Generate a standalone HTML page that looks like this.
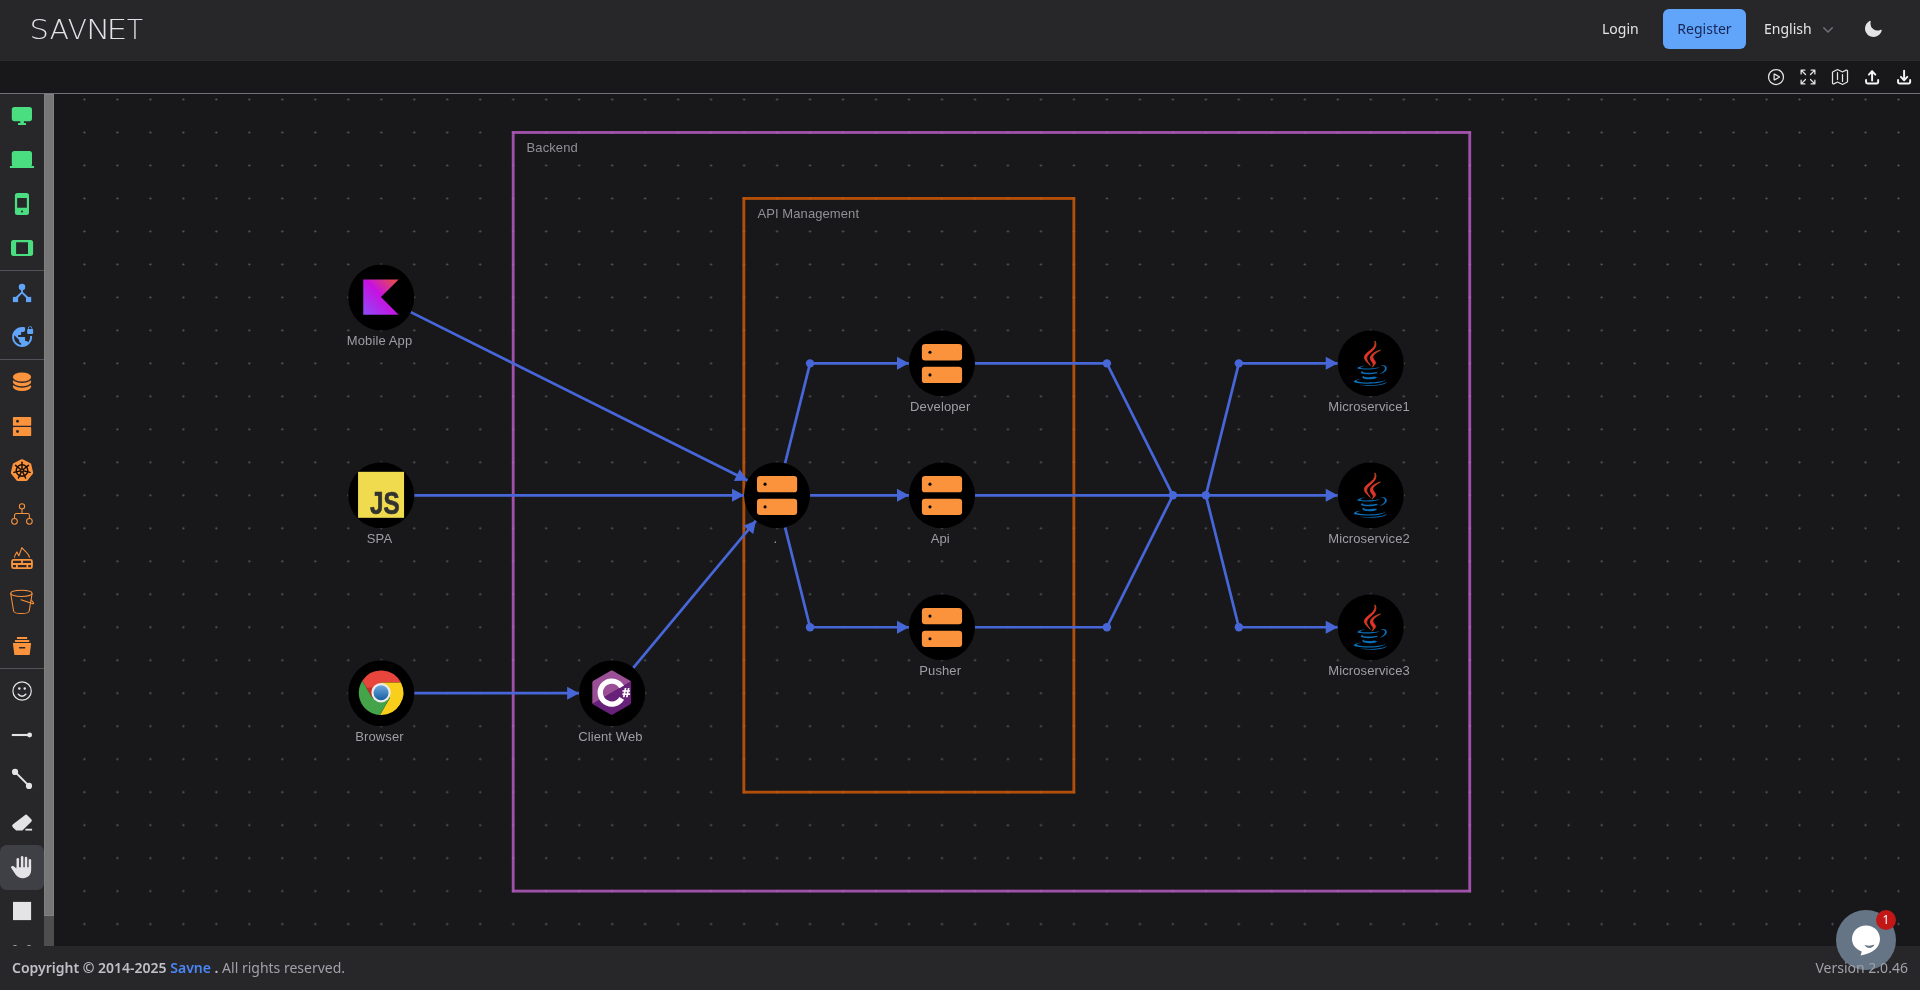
<!DOCTYPE html>
<html lang="en"><head><meta charset="utf-8"><title>SAVNET</title>
<style>
*{box-sizing:border-box}
html,body{margin:0;padding:0}
body{width:1920px;height:990px;overflow:hidden;background:#18181b;position:relative;font-family:"Noto Sans","Liberation Sans","DejaVu Sans",sans-serif;font-size:14px;color:#e4e4e7}
#root{position:absolute;left:0;top:0;width:1920px;height:990px;overflow:hidden;will-change:transform}
#hd{position:absolute;left:0;top:0;width:1920px;height:61px;background:#27272a;border-bottom:1px solid #2a2a2d}
#logo{position:absolute;left:0;top:0}
.hl{position:absolute;top:9px;height:40px;line-height:39px;white-space:nowrap}
#reg{position:absolute;left:1663px;top:9px;width:83px;height:40px;border-radius:6px;background:#60a5fa;color:#172554;text-align:center;line-height:39px}
#tb{position:absolute;left:0;top:61px;width:1920px;height:33px;border-bottom:1px solid #71717a;background:#18181b}
.ti{position:absolute;top:6px}
#sb{position:absolute;left:0;top:94px;width:44px;height:852px;background:#27272a;overflow:hidden}
.si{position:absolute;display:block;overflow:visible}
.sep{position:absolute;left:0;width:44px;height:1px;background:#52525b}
#sel{position:absolute;left:0;top:751px;width:43.5px;height:44.500px;border-radius:6.500px;background:#3f3f46}
#scr{position:absolute;left:44px;top:94px;width:10px;height:852px;background:#4e4e4e}
#thumb{position:absolute;left:0;top:0;width:10px;height:822px;background:#777;border:1px solid #818181}
#cv{position:absolute;left:54px;top:94px}
.nl{font-family:"Liberation Sans",Arial,sans-serif;font-size:13px;fill:#9e9ea3;letter-spacing:.11px}
.gl{font-family:"Liberation Sans",Arial,sans-serif;font-size:13px;fill:#909095;letter-spacing:.09px}
#ft{position:absolute;left:0;top:946px;width:1920px;height:44px;background:#27272a;color:#a1a1aa}
#ft b{color:#c0c0c6;font-weight:600}
#ft a{color:#4a86f5;text-decoration:none}
#ftl{position:absolute;left:12px;top:12px;line-height:20px;white-space:nowrap}
#ftr{position:absolute;right:12.1px;top:12px;line-height:20px;white-space:nowrap;z-index:5}
#chat{position:absolute;left:1836px;top:910px;width:60px;height:60px;border-radius:50%;background:#657585;z-index:3}
#badge{position:absolute;left:1876px;top:910px;width:20px;height:20px;border-radius:50%;background:#c11717;color:#fff;font-size:12px;line-height:19px;text-align:center;z-index:4}
</style></head><body><div id="root">
<div id="hd">
<svg id="logo" width="180" height="61" viewBox="0 0 180 61" font-family="'DejaVu Sans','Liberation Sans',sans-serif" font-weight="200" font-size="26" fill="#e2e2e6"><text transform="translate(29.44 39) scale(1.18 1)">S</text><text transform="translate(49.7 39) scale(1.075 1)">A</text><text transform="translate(67.7 39) scale(1.075 1)">V</text><text transform="translate(85.95 39) scale(1.25 1)">N</text><text transform="translate(106.4 39) scale(1.27 1)">E</text><text transform="translate(127 39)">T</text></svg>
<div class="hl" style="left:1602px">Login</div>
<div id="reg">Register</div>
<div class="hl" style="left:1764px">English</div>
<svg style="position:absolute;left:1818px;top:19px" width="20" height="20" viewBox="0 0 20 20"><path fill="#71717a" fill-rule="evenodd" d="M5.220 8.220a.75.75 0 0 1 1.060 0L10 11.940l3.720-3.720a.75.75 0 1 1 1.060 1.060l-4.250 4.250a.75.75 0 0 1-1.060 0L5.220 9.280a.75.75 0 0 1 0-1.060Z" clip-rule="evenodd"/></svg>
<svg style="position:absolute;left:1863px;top:19px" width="20" height="20" viewBox="0 0 20 20"><path fill="#e4e4e7" fill-rule="evenodd" d="M7.455 2.004a.75.75 0 0 1 .26.770 7 7 0 0 0 9.958 7.967.75.75 0 0 1 1.067.853A8.500 8.500 0 1 1 6.647 1.921a.75.75 0 0 1 .808.083Z" clip-rule="evenodd"/></svg>
</div>
<div id="tb"><svg class="ti" style="left:1766px;top:6px" width="20" height="20" viewBox="0 0 24 24" fill="none" stroke="#e4e4e7" stroke-width="1.500" stroke-linecap="round" stroke-linejoin="round"><path d="M21 12a9 9 0 1 1-18 0 9 9 0 0 1 18 0Z"/><path d="M15.910 11.672a.375.375 0 0 1 0 .656l-5.603 3.113a.375.375 0 0 1-.557-.328V8.887c0-.286.307-.466.557-.327l5.603 3.112Z"/></svg><svg class="ti" style="left:1798px;top:6px" width="20" height="20" viewBox="0 0 24 24" fill="none" stroke="#e4e4e7" stroke-width="1.500" stroke-linecap="round" stroke-linejoin="round"><path d="M3.750 3.750v4.500m0-4.500h4.500m-4.500 0L9 9M3.750 20.250v-4.500m0 4.500h4.500m-4.500 0L9 15M20.250 3.750h-4.500m4.500 0v4.500m0-4.500L15 9m5.250 11.250h-4.500m4.500 0v-4.500m0 4.500L15 15"/></svg><svg class="ti" style="left:1830px;top:6px" width="20" height="20" viewBox="0 0 24 24" fill="none" stroke="#e4e4e7" stroke-width="1.500" stroke-linecap="round" stroke-linejoin="round"><path d="M9 6.750V15m6-6v8.250m.503 3.498 4.875-2.437c.381-.19.622-.58.622-1.006V4.820c0-.836-.88-1.380-1.628-1.006l-3.869 1.934c-.317.159-.69.159-1.006 0L9.503 3.252a1.125 1.125 0 0 0-1.006 0L3.622 5.689C3.240 5.880 3 6.270 3 6.695V19.180c0 .836.880 1.380 1.628 1.006l3.869-1.934c.317-.159.69-.159 1.006 0l4.994 2.497c.317.158.69.158 1.006 0Z"/></svg><svg style="position:absolute;left:1856px;top:0" width="64" height="33" viewBox="1856 61 64 33" fill="none" stroke="#f4f4f5" stroke-width="1.950" stroke-linecap="round" stroke-linejoin="round"><path d="M1866.05 79.900v2.050a1.500 1.500 0 0 0 1.500 1.500h9.100a1.500 1.500 0 0 0 1.500-1.500V79.900"/><path d="M1872.10 80.400V71.300M1868.90 74.600 1872.10 71.150 1875.30 74.600"/><path d="M1898.05 79.900v2.050a1.500 1.500 0 0 0 1.500 1.500h9.100a1.500 1.500 0 0 0 1.500-1.500V79.900"/><path d="M1904.10 70.600V80.200M1900.90 76.900 1904.10 80.350 1907.30 76.900"/></svg></div>
<div id="sb"><div id="sel"></div><div class="sep" style="top:176px"></div><div class="sep" style="top:265px"></div><div class="sep" style="top:574px"></div>
<svg width="44" height="852" viewBox="0 94 44 852" style="position:absolute;left:0;top:0"><g fill="#4ade80"><rect x="11.800" y="106.900" width="20.200" height="14.300" rx="2.600"/><rect x="20.300" y="120.500" width="3.600" height="3"/><rect x="18" y="123" width="8" height="2" rx=".3"/></g>
<g fill="#4ade80"><rect x="11.800" y="150.900" width="20.200" height="15.800" rx="2.600"/><rect x="9.900" y="165.900" width="24.200" height="2.100" rx=".3"/></g>
<path fill="#4ade80" fill-rule="evenodd" d="M17.400 192.900h9.100a2.500 2.500 0 0 1 2.500 2.500v17.200a2.500 2.500 0 0 1-2.500 2.500h-9.100a2.500 2.500 0 0 1-2.500-2.500v-17.200a2.500 2.500 0 0 1 2.500-2.500zM17.150 198.100v9.600h9.700v-9.600zM22 210.500a1 1 0 1 0 0 2 1 1 0 0 0 0-2z"/>
<path fill="#4ade80" fill-rule="evenodd" d="M13.500 240h17.100a2.500 2.500 0 0 1 2.500 2.500v10.900a2.500 2.500 0 0 1-2.500 2.500H13.500a2.500 2.500 0 0 1-2.500-2.500v-10.900a2.500 2.500 0 0 1 2.500-2.500zM16.100 242.200v11.700h11.900v-11.700z"/>
<g fill="#60a5fa"><circle cx="22" cy="286.900" r="3.250"/><rect x="12.900" y="296.900" width="5.200" height="5.200"/><rect x="26" y="296.900" width="5.200" height="5.200"/></g><path d="M22 288v5M22 292.300 16.300 298M22 292.300 27.700 298" stroke="#60a5fa" stroke-width="1.900" fill="none"/>
<g transform="translate(11.10 324.10) scale(1.0000 1.0000)"><path fill="#60a5fa" d="M18.920 12c.04.330.08.660.08 1 0 2.080-.8 3.970-2.100 5.390-.26-.81-1-1.390-1.900-1.390h-1v-3c0-.55-.45-1-1-1H7v-2h2c.55 0 1-.45 1-1V8h2c1.100 0 2-.9 2-2V3.460c-.95-.3-1.950-.46-3-.46C5.480 3 1 7.480 1 13s4.480 10 10 10 10-4.480 10-10c0-.34-.02-.67-.05-1h-2.030zM10 20.930c-3.950-.49-7-3.850-7-7.930 0-.62.080-1.210.21-1.790L8 16v1c0 1.100.9 2 2 2v1.930z"/><g transform="translate(19.050 9.900) scale(.85) translate(-19.500 -10)"><path fill="#60a5fa" d="M22 4v-.5C22 2.120 20.880 1 19.500 1S17 2.120 17 3.500V4c-.55 0-1 .45-1 1v4c0 .55.45 1 1 1h5c.55 0 1-.45 1-1V5c0-.55-.45-1-1-1zm-.8 0h-3.400v-.5c0-.94.760-1.700 1.700-1.700s1.700.760 1.700 1.700V4z"/></g></g>
<ellipse cx="22" cy="386.55" rx="10.600" ry="5.950" fill="#27272a"/><ellipse cx="22" cy="386.55" rx="9.150" ry="4.450" fill="#fb923c"/><ellipse cx="22" cy="381.75" rx="10.600" ry="5.950" fill="#27272a"/><ellipse cx="22" cy="381.75" rx="9.150" ry="4.450" fill="#fb923c"/><ellipse cx="22" cy="377.00" rx="10.600" ry="5.950" fill="#27272a"/><ellipse cx="22" cy="377.00" rx="9.150" ry="4.450" fill="#fb923c"/>
<g fill="#fb923c"><rect x="12.900" y="416.900" width="18.300" height="8.900" rx=".9"/><rect x="12.900" y="427" width="18.300" height="9.100" rx=".9"/></g><g fill="#27272a"><circle cx="17.500" cy="421.300" r="1.450"/><circle cx="17.500" cy="431.500" r="1.450"/></g>
<polygon points="22.00,460.50 29.90,464.30 31.85,472.85 26.38,479.70 17.62,479.70 12.15,472.85 14.10,464.30" fill="#fb923c" stroke="#fb923c" stroke-width="2.600" stroke-linejoin="round"/><g stroke="#150d05" stroke-width="1.450" fill="none" stroke-linecap="round"><circle cx="22.00" cy="470.50" r="5.800"/><path d="M22.00 470.50 L22.00 462.20"/><path d="M22.00 470.50 L28.49 465.33"/><path d="M22.00 470.50 L30.09 472.35"/><path d="M22.00 470.50 L25.60 477.98"/><path d="M22.00 470.50 L18.40 477.98"/><path d="M22.00 470.50 L13.91 472.35"/><path d="M22.00 470.50 L15.51 465.33"/></g><circle cx="22.00" cy="470.50" r="1.900" fill="#150d05"/><circle cx="22.00" cy="470.50" r=".8" fill="#fb923c"/>
<g stroke="#fb923c" stroke-width="1.050" fill="none"><circle cx="22" cy="506.300" r="2.650"/><circle cx="14.500" cy="521.300" r="2.850"/><circle cx="29.400" cy="521.300" r="2.850"/><path d="M22 509v4.500M14.500 518.300v-3a1.800 1.800 0 0 1 1.800-1.800h11.300a1.800 1.800 0 0 1 1.800 1.800v3"/></g>
<g stroke="#fb923c" fill="none" stroke-linejoin="round" stroke-linecap="round"><g stroke-width="1.800"><rect x="12.100" y="559.800" width="19.800" height="8.400" rx="1.400"/><path d="M12.100 564h19.800M22 559.800v4.200M16.900 564v4.200M27.400 564v4.200"/></g><path stroke-width="1.100" d="M14.500 557.300c.3-2.300 1.500-3.600 2.400-5.300l1.900 3.800c1-2.500 2.300-5.300 3-8.100 2.200 3 6.700 5.400 7.600 9.600"/></g>
<g stroke="#fb923c" stroke-width="1.020" fill="none" stroke-linejoin="round" stroke-linecap="round"><ellipse cx="21.400" cy="593.300" rx="10.700" ry="3.100"/><path d="M10.700 593.600 13.600 611c.3 1.500 3.600 2.600 7.800 2.600s7.500-1.100 7.800-2.600l2.900-17.400"/><path d="M21 599.800 32.300 603.500M32.300 603.500c1.300.4 1.700 0 1.100-.8l-2.100-2.600"/></g>
<g fill="#fb923c"><rect x="16.900" y="636.900" width="10.300" height="2" rx=".4"/><rect x="14.900" y="640" width="14.400" height="1.950" rx=".4"/><path fill-rule="evenodd" d="M13.300 643h17.300a.5.500 0 0 1 .5.600l-1.400 11a.6.600 0 0 1-.6.500H14.900a.6.600 0 0 1-.6-.5l-1.400-11a.5.500 0 0 1 .4-.6zM19.100 647v1.600h6.100V647z"/></g>
<g stroke="#e4e4e7" stroke-width="1.200" fill="none" stroke-linecap="round"><circle cx="22.100" cy="691" r="9.200"/><path stroke-width="1.500" d="M18.300 694.200a4.400 4.400 0 0 0 7.500 0"/></g><g fill="#e4e4e7"><circle cx="19.300" cy="688.600" r="1.250"/><circle cx="24.750" cy="688.600" r="1.250"/></g>
<path d="M11.800 735H29" stroke="#e4e4e7" stroke-width="2.100"/><circle cx="29.600" cy="735" r="2.450" fill="#e4e4e7"/>
<path d="M15.050 771.900 29 785.900" stroke="#e4e4e7" stroke-width="2"/><circle cx="15.050" cy="771.900" r="3.100" fill="#e4e4e7"/><circle cx="29" cy="785.900" r="3.100" fill="#e4e4e7"/>
<g transform="translate(11.20 812.20) scale(0.9000 0.9000)"><g fill="#e4e4e7"><path d="M15.100 3.300a2 2 0 0 1 2.800 0l4.400 4.400a2 2 0 0 1 0 2.800L13 19.800a2 2 0 0 1-1.400.6H6.300a2 2 0 0 1-1.400-.6L1.700 16.600a2 2 0 0 1 0-2.800z"/><rect x="15.800" y="18.400" width="7.400" height="2"/></g></g>
<g fill="#e4e4e7"><rect x="16.55" y="858.00" width="2.500" height="11.00" rx="1.250"/><rect x="20.85" y="855.90" width="2.500" height="13.10" rx="1.250"/><rect x="24.75" y="856.80" width="2.500" height="12.20" rx="1.250"/><rect x="28.65" y="859.00" width="2.500" height="10.00" rx="1.250"/><path d="M16.550 868.400 13.600 866.200C12.600 865.600 11.400 865.900 11.100 866.800 10.900 867.400 11.300 868 11.600 868.400L15.400 874.300C17.200 876.800 19.800 878.200 23 878.200 27.800 878.200 31.150 874.800 31.150 870V867.300H16.550Z"/></g>
<rect x="13" y="901.900" width="18.100" height="18.200" fill="#e4e4e7"/>
<g opacity=".8"><rect x="13.300" y="945.200" width="3.400" height="2" rx=".6" fill="#e4e4e7"/><rect x="27.300" y="945.200" width="3.400" height="2" rx=".6" fill="#e4e4e7"/></g></svg>
</div>
<div id="scr"><div id="thumb"></div></div>

<svg id="cv" width="1866" height="852" viewBox="54 94 1866 852">
<defs>
<pattern id="dots" x="67.90" y="83.00" width="32.984" height="32.984" patternUnits="userSpaceOnUse"><circle cx="16.5" cy="16.5" r="1.1" fill="#5d5d61"/></pattern>
<linearGradient id="kt" x1="1" y1="0" x2="0" y2="1"><stop offset="0" stop-color="#e44857"/><stop offset=".1" stop-color="#e44857"/><stop offset=".47" stop-color="#c711e1"/><stop offset="1" stop-color="#8f4bf6"/></linearGradient>
<linearGradient id="chb" x1="0" y1="0" x2="0" y2="1"><stop offset="0" stop-color="#6fa8e0"/><stop offset="1" stop-color="#175fa0"/></linearGradient>
</defs>
<rect x="54" y="94" width="1866" height="852" fill="url(#dots)"/>
<rect x="513.19" y="132.48" width="956.54" height="758.63" fill="none" stroke="#c25fcd" stroke-opacity=".8" stroke-width="2.850"/>
<rect x="743.83" y="198.45" width="330.04" height="593.71" fill="none" stroke="#db5d05" stroke-opacity=".8" stroke-width="2.850"/>
<text class="gl" x="526.6" y="152.2">Backend</text>
<text class="gl" x="757.4" y="218">API Management</text>
<path d="M410.77 312.16 L747.55 480.55" fill="none" stroke="#4767d9" stroke-width="2.700" stroke-linejoin="round"/>
<polygon points="747.55,480.55 733.91,481.00 739.72,469.37" fill="#4767d9"/>
<path d="M414.26 495.31 L744.06 495.31" fill="none" stroke="#4767d9" stroke-width="2.700" stroke-linejoin="round"/>
<polygon points="744.06,495.31 732.06,501.81 732.06,488.81" fill="#4767d9"/>
<path d="M414.26 693.21 L579.14 693.21" fill="none" stroke="#4767d9" stroke-width="2.700" stroke-linejoin="round"/>
<polygon points="579.14,693.21 567.14,699.71 567.14,686.71" fill="#4767d9"/>
<path d="M633.27 667.86 L755.94 520.66" fill="none" stroke="#4767d9" stroke-width="2.700" stroke-linejoin="round"/>
<polygon points="755.94,520.66 753.25,534.04 743.26,525.72" fill="#4767d9"/>
<path d="M785.07 463.29 L810.05 363.37 L908.98 363.37" fill="none" stroke="#4767d9" stroke-width="2.700" stroke-linejoin="round"/>
<polygon points="908.98,363.37 896.98,369.87 896.98,356.87" fill="#4767d9"/>
<path d="M810.06 495.31 L908.98 495.31" fill="none" stroke="#4767d9" stroke-width="2.700" stroke-linejoin="round"/>
<polygon points="908.98,495.31 896.98,501.81 896.98,488.81" fill="#4767d9"/>
<path d="M785.07 527.32 L810.05 627.24 L908.98 627.24" fill="none" stroke="#4767d9" stroke-width="2.700" stroke-linejoin="round"/>
<polygon points="908.98,627.24 896.98,633.74 896.98,620.74" fill="#4767d9"/>
<path d="M974.98 363.37 L1106.90 363.37 L1172.87 495.31" fill="none" stroke="#4767d9" stroke-width="2.700" stroke-linejoin="round"/>
<path d="M974.98 627.24 L1106.90 627.24 L1172.87 495.31" fill="none" stroke="#4767d9" stroke-width="2.700" stroke-linejoin="round"/>
<path d="M974.98 495.31 L1172.87 495.31" fill="none" stroke="#4767d9" stroke-width="2.700" stroke-linejoin="round"/>
<path d="M1172.87 495.31 L1205.86 495.31" fill="none" stroke="#4767d9" stroke-width="2.700" stroke-linejoin="round"/>
<path d="M1205.86 495.31 L1238.84 363.37 L1337.78 363.37" fill="none" stroke="#4767d9" stroke-width="2.700" stroke-linejoin="round"/>
<polygon points="1337.78,363.37 1325.78,369.87 1325.78,356.87" fill="#4767d9"/>
<path d="M1205.86 495.31 L1337.78 495.31" fill="none" stroke="#4767d9" stroke-width="2.700" stroke-linejoin="round"/>
<polygon points="1337.78,495.31 1325.78,501.81 1325.78,488.81" fill="#4767d9"/>
<path d="M1205.86 495.31 L1238.84 627.24 L1337.78 627.24" fill="none" stroke="#4767d9" stroke-width="2.700" stroke-linejoin="round"/>
<polygon points="1337.78,627.24 1325.78,633.74 1325.78,620.74" fill="#4767d9"/>
<circle cx="810.05" cy="363.37" r="4.2" fill="#4767d9"/>
<circle cx="810.05" cy="627.24" r="4.2" fill="#4767d9"/>
<circle cx="1106.90" cy="363.37" r="4.2" fill="#4767d9"/>
<circle cx="1106.90" cy="627.24" r="4.2" fill="#4767d9"/>
<circle cx="1172.87" cy="495.31" r="4.2" fill="#4767d9"/>
<circle cx="1205.86" cy="495.31" r="4.2" fill="#4767d9"/>
<circle cx="1238.84" cy="363.37" r="4.2" fill="#4767d9"/>
<circle cx="1238.84" cy="627.24" r="4.2" fill="#4767d9"/>
<circle cx="381.26" cy="297.40" r="33" fill="#000"/>
<polygon points="363.26,279.40 398.66,279.40 380.96,297.10 398.66,314.80 363.26,314.80" fill="url(#kt)"/>
<text class="nl" x="379.51" y="345.00" text-anchor="middle">Mobile App</text>
<circle cx="381.26" cy="495.31" r="33" fill="#000"/>
<rect x="358.06" y="471.81" width="46" height="46" fill="#f0db4f"/><text x="370.06" y="513.61" font-family="'Liberation Sans',Arial,sans-serif" font-weight="700" font-size="30.5" fill="#323330" stroke="#323330" stroke-width=".7" textLength="29.6" lengthAdjust="spacingAndGlyphs">JS</text>
<text class="nl" x="379.51" y="542.91" text-anchor="middle">SPA</text>
<circle cx="381.26" cy="693.21" r="33" fill="#000"/>
<path d="M372.22 697.81 L362.31 680.64 A22.30 22.30 0 0 1 400.89 682.51 L381.06 682.51 L381.06 692.71 Z" fill="#e8453c"/><path d="M381.06 682.51 L400.89 682.51 A22.30 22.30 0 0 1 379.97 714.99 L389.89 697.81 L381.06 692.71 Z" fill="#f9cf1c"/><path d="M389.89 697.81 L379.97 714.99 A22.30 22.30 0 0 1 362.31 680.64 L372.22 697.81 L381.06 692.71 Z" fill="#45a349"/><path d="M372.22 697.81 L372.22 687.61 L366.26 687.63 Z" fill="#b5271d" opacity=".75"/><circle cx="381.06" cy="692.71" r="9.7" fill="#ececec"/><circle cx="381.06" cy="692.71" r="7.5" fill="url(#chb)"/>
<text class="nl" x="379.51" y="740.81" text-anchor="middle">Browser</text>
<circle cx="612.14" cy="693.21" r="33" fill="#000"/>
<g transform="translate(588.74 669.61) scale(.3594)"><path fill="#9B4F96" d="M115.4 30.7L67.1 2.9c-.8-.5-1.9-.7-3.1-.7-1.2 0-2.3.3-3.1.7l-48 27.9c-1.700 1-2.900 3.500-2.900 5.400v55.700c0 1.100.2 2.400 1 3.500l106.800-62c-.6-1.200-1.500-2.100-2.400-2.700z"/><path fill="#68217A" d="M10.700 95.300c.5.800 1.200 1.500 1.900 1.900l48.200 27.900c.8.500 1.900.7 3.100.7 1.200 0 2.300-.3 3.100-.7l48-27.900c1.700-1 2.900-3.500 2.900-5.400V36.100c0-.9-.1-1.900-.6-2.800l-106.600 62z"/><path fill="#fff" d="M85.300 76.100C81.100 83.500 73.100 88.500 64 88.500c-13.500 0-24.500-11-24.500-24.500s11-24.500 24.500-24.500c9.100 0 17.100 5 21.300 12.500l13-7.500c-6.800-11.900-19.600-20-34.300-20-21.800 0-39.500 17.700-39.500 39.500s17.700 39.500 39.500 39.500c14.600 0 27.400-8 34.200-19.800l-12.900-7.600zM97 66.200l.9-4.300h-4.200v-4.700h5.100L100 51h4.900l-1.200 6.100h3.800l1.200-6.100h4.800l-1.200 6.100h2.400v4.700h-3.300l-.9 4.300h4.200v4.700h-5.100l-1.200 6h-4.900l1.200-6h-3.800l-1.200 6h-4.800l1.200-6h-2.400v-4.700H97zm4.800 0h3.800l.9-4.300h-3.800l-.9 4.300z"/></g>
<text class="nl" x="610.39" y="740.81" text-anchor="middle">Client Web</text>
<circle cx="777.06" cy="495.31" r="33" fill="#000"/>
<rect x="756.96" y="476.06" width="40.2" height="16.3" rx="3.2" fill="#fb923c"/><circle cx="765.06" cy="484.16" r="1.55" fill="#000"/><rect x="756.96" y="498.76" width="40.2" height="16.3" rx="3.2" fill="#fb923c"/><circle cx="765.06" cy="506.86" r="1.55" fill="#000"/>
<text class="nl" x="775.31" y="542.91" text-anchor="middle">.</text>
<circle cx="941.98" cy="363.37" r="33" fill="#000"/>
<rect x="921.88" y="344.12" width="40.2" height="16.3" rx="3.2" fill="#fb923c"/><circle cx="929.98" cy="352.22" r="1.55" fill="#000"/><rect x="921.88" y="366.82" width="40.2" height="16.3" rx="3.2" fill="#fb923c"/><circle cx="929.98" cy="374.92" r="1.55" fill="#000"/>
<text class="nl" x="940.23" y="410.97" text-anchor="middle">Developer</text>
<circle cx="941.98" cy="495.31" r="33" fill="#000"/>
<rect x="921.88" y="476.06" width="40.2" height="16.3" rx="3.2" fill="#fb923c"/><circle cx="929.98" cy="484.16" r="1.55" fill="#000"/><rect x="921.88" y="498.76" width="40.2" height="16.3" rx="3.2" fill="#fb923c"/><circle cx="929.98" cy="506.86" r="1.55" fill="#000"/>
<text class="nl" x="940.23" y="542.91" text-anchor="middle">Api</text>
<circle cx="941.98" cy="627.24" r="33" fill="#000"/>
<rect x="921.88" y="607.99" width="40.2" height="16.3" rx="3.2" fill="#fb923c"/><circle cx="929.98" cy="616.09" r="1.55" fill="#000"/><rect x="921.88" y="630.69" width="40.2" height="16.3" rx="3.2" fill="#fb923c"/><circle cx="929.98" cy="638.79" r="1.55" fill="#000"/>
<text class="nl" x="940.23" y="674.84" text-anchor="middle">Pusher</text>
<circle cx="1370.78" cy="363.37" r="33" fill="#000"/>
<g transform="translate(1347.28 340.37) scale(.3594)"><path fill="#0b6eb6" d="M47.617 98.120s-4.767 2.774 3.397 3.710c9.892 1.130 14.947.968 25.845-1.092 0 0 2.871 1.795 6.873 3.351-24.439 10.470-55.308-.607-36.115-5.969zm-2.988-13.665s-5.348 3.959 2.823 4.805c10.567 1.091 18.910 1.180 33.354-1.600 0 0 1.993 2.025 5.132 3.131-29.542 8.640-62.446.680-41.309-6.336z"/><path fill="#EA2D2E" stroke="#d9731a" stroke-width="1.700" paint-order="stroke" d="M69.802 61.271c6.025 6.935-1.580 13.170-1.580 13.170s15.289-7.891 8.269-17.777c-6.559-9.215-11.587-13.792 15.635-29.580 0 .001-42.731 10.670-22.324 34.187z"/><path fill="#0b6eb6" d="M102.123 108.229s3.529 2.910-3.888 5.159c-14.102 4.272-58.706 5.560-71.094.171-4.451-1.938 3.899-4.625 6.526-5.192 2.739-.593 4.303-.485 4.303-.485-4.953-3.487-32.013 6.850-13.743 9.815 49.821 8.076 90.817-3.637 77.896-9.468zM49.912 70.294s-22.686 5.389-8.033 7.348c6.188.828 18.518.638 30.011-.326 9.390-.789 18.813-2.474 18.813-2.474s-3.308 1.419-5.704 3.053c-23.042 6.061-67.544 3.238-54.731-2.958 10.832-5.239 19.644-4.643 19.644-4.643zm40.697 22.747c23.421-12.167 12.591-23.860 5.032-22.285-1.848.385-2.677.720-2.677.720s.688-1.079 2-1.543c14.953-5.255 26.451 15.503-4.823 23.725 0-.002.359-.327.468-.617z"/><path fill="#EA2D2E" stroke="#d9731a" stroke-width="1.700" paint-order="stroke" d="M76.491 1.587S89.459 14.563 64.188 34.510c-20.266 16.006-4.621 25.130-.007 35.559-11.831-10.673-20.509-20.070-14.688-28.815C58.041 28.420 81.722 22.195 76.491 1.587z"/><path fill="#0b6eb6" d="M52.214 126.021c22.476 1.437 57-.8 57.817-11.436 0 0-1.571 4.032-18.577 7.231-19.186 3.612-42.854 3.191-56.887.874 0 .001 2.875 2.381 17.647 3.331z"/></g>
<text class="nl" x="1369.03" y="410.97" text-anchor="middle">Microservice1</text>
<circle cx="1370.78" cy="495.31" r="33" fill="#000"/>
<g transform="translate(1347.28 472.31) scale(.3594)"><path fill="#0b6eb6" d="M47.617 98.120s-4.767 2.774 3.397 3.710c9.892 1.130 14.947.968 25.845-1.092 0 0 2.871 1.795 6.873 3.351-24.439 10.470-55.308-.607-36.115-5.969zm-2.988-13.665s-5.348 3.959 2.823 4.805c10.567 1.091 18.910 1.180 33.354-1.600 0 0 1.993 2.025 5.132 3.131-29.542 8.640-62.446.680-41.309-6.336z"/><path fill="#EA2D2E" stroke="#d9731a" stroke-width="1.700" paint-order="stroke" d="M69.802 61.271c6.025 6.935-1.580 13.170-1.580 13.170s15.289-7.891 8.269-17.777c-6.559-9.215-11.587-13.792 15.635-29.580 0 .001-42.731 10.670-22.324 34.187z"/><path fill="#0b6eb6" d="M102.123 108.229s3.529 2.910-3.888 5.159c-14.102 4.272-58.706 5.560-71.094.171-4.451-1.938 3.899-4.625 6.526-5.192 2.739-.593 4.303-.485 4.303-.485-4.953-3.487-32.013 6.850-13.743 9.815 49.821 8.076 90.817-3.637 77.896-9.468zM49.912 70.294s-22.686 5.389-8.033 7.348c6.188.828 18.518.638 30.011-.326 9.390-.789 18.813-2.474 18.813-2.474s-3.308 1.419-5.704 3.053c-23.042 6.061-67.544 3.238-54.731-2.958 10.832-5.239 19.644-4.643 19.644-4.643zm40.697 22.747c23.421-12.167 12.591-23.860 5.032-22.285-1.848.385-2.677.720-2.677.720s.688-1.079 2-1.543c14.953-5.255 26.451 15.503-4.823 23.725 0-.002.359-.327.468-.617z"/><path fill="#EA2D2E" stroke="#d9731a" stroke-width="1.700" paint-order="stroke" d="M76.491 1.587S89.459 14.563 64.188 34.510c-20.266 16.006-4.621 25.130-.007 35.559-11.831-10.673-20.509-20.070-14.688-28.815C58.041 28.420 81.722 22.195 76.491 1.587z"/><path fill="#0b6eb6" d="M52.214 126.021c22.476 1.437 57-.8 57.817-11.436 0 0-1.571 4.032-18.577 7.231-19.186 3.612-42.854 3.191-56.887.874 0 .001 2.875 2.381 17.647 3.331z"/></g>
<text class="nl" x="1369.03" y="542.91" text-anchor="middle">Microservice2</text>
<circle cx="1370.78" cy="627.24" r="33" fill="#000"/>
<g transform="translate(1347.28 604.24) scale(.3594)"><path fill="#0b6eb6" d="M47.617 98.120s-4.767 2.774 3.397 3.710c9.892 1.130 14.947.968 25.845-1.092 0 0 2.871 1.795 6.873 3.351-24.439 10.470-55.308-.607-36.115-5.969zm-2.988-13.665s-5.348 3.959 2.823 4.805c10.567 1.091 18.910 1.180 33.354-1.600 0 0 1.993 2.025 5.132 3.131-29.542 8.640-62.446.680-41.309-6.336z"/><path fill="#EA2D2E" stroke="#d9731a" stroke-width="1.700" paint-order="stroke" d="M69.802 61.271c6.025 6.935-1.580 13.170-1.580 13.170s15.289-7.891 8.269-17.777c-6.559-9.215-11.587-13.792 15.635-29.580 0 .001-42.731 10.670-22.324 34.187z"/><path fill="#0b6eb6" d="M102.123 108.229s3.529 2.910-3.888 5.159c-14.102 4.272-58.706 5.560-71.094.171-4.451-1.938 3.899-4.625 6.526-5.192 2.739-.593 4.303-.485 4.303-.485-4.953-3.487-32.013 6.850-13.743 9.815 49.821 8.076 90.817-3.637 77.896-9.468zM49.912 70.294s-22.686 5.389-8.033 7.348c6.188.828 18.518.638 30.011-.326 9.390-.789 18.813-2.474 18.813-2.474s-3.308 1.419-5.704 3.053c-23.042 6.061-67.544 3.238-54.731-2.958 10.832-5.239 19.644-4.643 19.644-4.643zm40.697 22.747c23.421-12.167 12.591-23.860 5.032-22.285-1.848.385-2.677.720-2.677.720s.688-1.079 2-1.543c14.953-5.255 26.451 15.503-4.823 23.725 0-.002.359-.327.468-.617z"/><path fill="#EA2D2E" stroke="#d9731a" stroke-width="1.700" paint-order="stroke" d="M76.491 1.587S89.459 14.563 64.188 34.510c-20.266 16.006-4.621 25.130-.007 35.559-11.831-10.673-20.509-20.070-14.688-28.815C58.041 28.420 81.722 22.195 76.491 1.587z"/><path fill="#0b6eb6" d="M52.214 126.021c22.476 1.437 57-.8 57.817-11.436 0 0-1.571 4.032-18.577 7.231-19.186 3.612-42.854 3.191-56.887.874 0 .001 2.875 2.381 17.647 3.331z"/></g>
<text class="nl" x="1369.03" y="674.84" text-anchor="middle">Microservice3</text>
</svg>
<div id="ft"><div id="ftl"><b>Copyright © 2014-2025 <a>Savne</a> .</b> All rights reserved.</div><div id="ftr">Version 2.0.46</div></div>
<div id="chat"><svg width="60" height="60" viewBox="0 0 60 60" style="position:absolute;left:0;top:0"><path fill="#fff" d="M30 15.500c7.800 0 14 5.800 14 13.500 0 8.500-7.500 14.500-19.500 16.500.8-1.500 1.200-3 1-4.200C19.800 39.300 16 34.800 16 29c0-7.700 6.200-13.500 14-13.500z"/><path fill="#657585" d="M28.500 34.800c3 1.300 6.800 1.300 10-.2-1.700 4.300-7.600 4.900-10 .2z"/></svg></div>
<div id="badge">1</div>
</div></body></html>
